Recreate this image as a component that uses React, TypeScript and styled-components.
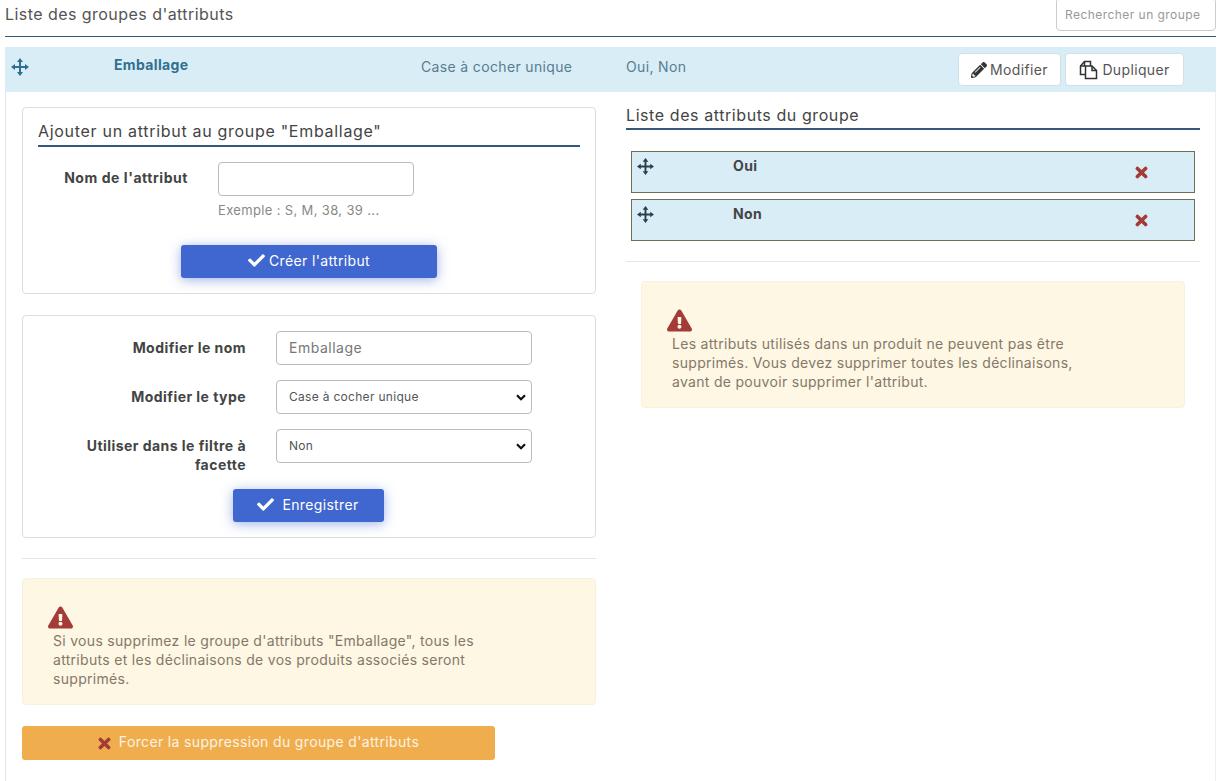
import React from "react";
import styled, { createGlobalStyle } from "styled-components";
import { FaCheck, FaExclamationTriangle, FaPencilAlt } from "react-icons/fa";

const GlobalStyle = createGlobalStyle`
  html, body {
    margin: 0;
    padding: 0;
    background: #fff;
    font-family: "Inter", "Open Sans", sans-serif;
    color: #444;
  }
  * { box-sizing: border-box; }
`;

const chevron =
  "data:image/svg+xml;utf8,<svg xmlns='http://www.w3.org/2000/svg' width='10' height='7' viewBox='0 0 10 7'><path d='M1 1.2l4 4 4-4' fill='none' stroke='%23111' stroke-width='2.2'/></svg>";

const Page = styled.div`
  width: 1220px;
  height: 781px;
  padding: 0 4px 0 5px;
  overflow: hidden;
`;

const TopBar = styled.div`
  display: flex;
  justify-content: space-between;
  align-items: flex-start;
  height: 37px;
  border-bottom: 1px solid #34587c;
`;

const PageTitle = styled.div`
  padding-top: 5px;
  font-size: 16px;
  letter-spacing: 0.45px;
  line-height: 18px;
  color: #555;
`;

const SearchInput = styled.input`
  width: 160px;
  height: 33px;
  margin-top: -2px;
  padding: 0 8px;
  border: 1px solid #ccc;
  border-radius: 4px;
  font: inherit;
  font-size: 12px;
  letter-spacing: 0.45px;
  &::placeholder { color: #999; opacity: 1; }
`;

const Panel = styled.section`
  margin-top: 10px;
  height: 734px;
  border-left: 1px solid #d9e6f2;
  border-right: 1px solid #e6f0f6;
`;

const PanelHeader = styled.header`
  display: grid;
  grid-template-columns: 109px 307px 205px 1fr auto;
  height: 45px;
  margin-left: -1px;
  margin-right: -1px;
  background: #d9edf7;
  color: #5a7c90;
  font-size: 14px;
  letter-spacing: 0.35px;
`;

const Cell = styled.div`
  padding-top: 11px;
  line-height: 18px;
`;

const GripCell = styled(Cell)`
  padding: 11px 0 0 6px;
  color: #2f6f8f;
`;

const GroupName = styled(Cell)`
  padding-top: 9px;
  font-weight: 700;
  color: #31708f;
`;

const HeaderActions = styled.div`
  display: flex;
  align-items: flex-start;
  gap: 4px;
  padding: 6px 32px 0 0;
`;

const GhostButton = styled.button<{ $w: number }>`
  display: flex;
  align-items: center;
  justify-content: center;
  gap: 3px;
  height: 33px;
  width: ${(p) => p.$w}px;
  padding: 0;
  background: #fff;
  border: 1px solid #d3dfe6;
  border-radius: 4px;
  font: inherit;
  font-size: 14px;
  letter-spacing: 0.35px;
  color: #555;
`;

const Columns = styled.div`
  display: grid;
  grid-template-columns: 574px 574px;
  column-gap: 30px;
  padding: 15px 16px 0;
`;

const Column = styled.div`
  display: flex;
  flex-direction: column;
`;

const Card = styled.div`
  border: 1px solid #ddd;
  border-radius: 4px;
  background: #fff;
`;

const AddCard = styled(Card)`
  height: 187px;
  padding: 15px 15px 0;
`;

const EditCard = styled(Card)`
  height: 223px;
  margin-top: 21px;
  padding: 15px 0 0;
`;

const SectionTitle = styled.h3`
  margin: 0;
  height: 24px;
  font-size: 16px;
  font-weight: 400;
  letter-spacing: 0.7px;
  line-height: 16px;
  color: #444;
  border-bottom: 2px solid #34587c;
`;

const RightTitle = styled(SectionTitle)`
  height: 23px;
  letter-spacing: 0.58px;
`;

const FieldRow = styled.div`
  display: grid;
  grid-template-columns: 150px 196px;
  column-gap: 30px;
  margin-top: 15px;
`;

const AddLabel = styled.label`
  padding-top: 7px;
  font-size: 14px;
  font-weight: 700;
  letter-spacing: 0.55px;
  line-height: 18px;
  white-space: nowrap;
  color: #444;
  text-align: right;
`;

const TextField = styled.input`
  width: 100%;
  height: 34px;
  padding: 0 12px 2px;
  border: 1px solid #bbb;
  border-radius: 4px;
  background: #fff;
  font: inherit;
  font-size: 14px;
  letter-spacing: 0.5px;
  color: #777;
`;

const Hint = styled.div`
  grid-column: 2;
  margin-top: 5px;
  font-size: 13px;
  letter-spacing: 0.35px;
  line-height: 18px;
  white-space: nowrap;
  color: #888;
`;

const ButtonRow = styled.div`
  display: flex;
  justify-content: center;
  padding-right: 2px;
`;

const AddButtonRow = styled(ButtonRow)`
  margin-top: 26px;
  padding-right: 0;
`;

const PrimaryButton = styled.button<{ $w: number; $gap: number }>`
  display: flex;
  align-items: center;
  justify-content: center;
  gap: ${(p) => p.$gap}px;
  height: 33px;
  width: ${(p) => p.$w}px;
  padding: 0 0 2px;
  border: none;
  border-radius: 3px;
  background: #3f67cf;
  color: #fff;
  font: inherit;
  font-size: 14px;
  letter-spacing: 0.35px;
  box-shadow: 0 2px 12px rgba(63, 103, 207, 0.5);
`;

const EditRow = styled.div`
  display: grid;
  grid-template-columns: 223px 256px;
  column-gap: 30px;
  margin-bottom: 15px;
`;

const EditLabel = styled.label`
  padding: 7px 0 0 50px;
  font-size: 14px;
  font-weight: 700;
  letter-spacing: 0.45px;
  line-height: 19px;
  color: #444;
  text-align: right;
`;

const SelectField = styled.select`
  width: 100%;
  height: 34px;
  padding: 0 12px 2px;
  appearance: none;
  border: 1px solid #bbb;
  border-radius: 4px;
  background: #fff url("${chevron}") no-repeat right 5px center;
  font: inherit;
  font-size: 12px;
  letter-spacing: 0.3px;
  color: #555;
`;

const Divider = styled.hr`
  width: 100%;
  margin: 20px 0 0;
  border: none;
  border-top: 1px solid #e5e5e5;
`;

const Alert = styled.div`
  height: 127px;
  padding: 27px 25px 0;
  background: #fdf7e3;
  border: 1px solid #faf1dc;
  border-radius: 4px;
`;

const LeftAlert = styled(Alert)`
  margin-top: 19px;
`;

const RightAlert = styled(Alert)`
  margin: 19px 15px 0;
`;

const AlertIcon = styled(FaExclamationTriangle)`
  display: block;
  width: 25px;
  height: 23px;
  color: #a33b38;
`;

const AlertText = styled.p`
  width: 440px;
  margin: 2px 0 0 5px;
  font-size: 14px;
  letter-spacing: 0.3px;
  line-height: 19px;
  color: #85786a;
`;

const DangerButton = styled.button`
  display: flex;
  align-items: center;
  justify-content: center;
  gap: 8px;
  width: 473px;
  height: 34px;
  margin-top: 21px;
  padding: 0 0 3px;
  border: none;
  border-radius: 3px;
  background: #f0ad4e;
  color: #fdf3e2;
  font: inherit;
  font-size: 14px;
  letter-spacing: 0.35px;
`;

const DangerIcon = styled.span`
  display: flex;
  padding-top: 3px;
  color: #a33b38;
`;

const AttributeList = styled.div`
  display: flex;
  flex-direction: column;
  gap: 6px;
  margin: 21px 5px 0;
`;

const AttributeRow = styled.div`
  display: grid;
  grid-template-columns: 101px 1fr 59px;
  height: 42px;
  background: #d9edf7;
  border: 1px solid #6e6e55;
  font-size: 14px;
  font-weight: 700;
  letter-spacing: 0.4px;
  color: #444;
`;

const AttrGrip = styled.div`
  padding: 6px 0 0 5px;
  color: #2c3e50;
`;

const AttrName = styled.div`
  padding-top: 5px;
  line-height: 18px;
`;

const DeleteCell = styled.div`
  padding-top: 13px;
  color: #a33b38;
`;

const MoveIcon = ({ size }: { size: number }) => (
  <svg width={size} height={size} viewBox="0 0 18 18" fill="currentColor">
    <path d="M9 0l3 4h-2v4h4V6l4 3-4 3v-2h-4v4h2l-3 4-3-4h2v-4H4v2L0 9l4-3v2h4V4H6z" />
  </svg>
);

const CrossIcon = ({ size }: { size: number }) => (
  <svg width={size} height={size} viewBox="0 0 13 13" fill="none" stroke="currentColor" strokeWidth="3.6" strokeLinecap="round">
    <path d="M2.4 2.4l8.2 8.2M10.6 2.4l-8.2 8.2" />
  </svg>
);

const DuplicateIcon = () => (
  <svg width="20" height="20" viewBox="0 0 20 20" fill="none" stroke="#333" strokeWidth="1.5">
    <path d="M6.5 14.5H1.5V6L5.5 1.5h6V6" />
    <path d="M5.5 1.5V6H1.5" />
    <path d="M6.5 6h6.5L17.5 10.5v8H6.5z" />
    <path d="M13 6v4.5h4.5" />
  </svg>
);

const AttributeItem = ({ name }: { name: string }) => (
  <AttributeRow>
    <AttrGrip>
      <MoveIcon size={17} />
    </AttrGrip>
    <AttrName>{name}</AttrName>
    <DeleteCell>
      <CrossIcon size={13} />
    </DeleteCell>
  </AttributeRow>
);

export default function App() {
  return (
    <Page>
      <GlobalStyle />
      <TopBar>
        <PageTitle>Liste des groupes d'attributs</PageTitle>
        <SearchInput placeholder="Rechercher un groupe" />
      </TopBar>
      <Panel>
        <PanelHeader>
          <GripCell>
            <MoveIcon size={18} />
          </GripCell>
          <GroupName>Emballage</GroupName>
          <Cell>Case à cocher unique</Cell>
          <Cell>Oui, Non</Cell>
          <HeaderActions>
            <GhostButton $w={103}>
              <FaPencilAlt size={16} color="#333" />
              Modifier
            </GhostButton>
            <GhostButton $w={119}>
              <DuplicateIcon />
              Dupliquer
            </GhostButton>
          </HeaderActions>
        </PanelHeader>
        <Columns>
          <Column>
            <AddCard>
              <SectionTitle>Ajouter un attribut au groupe "Emballage"</SectionTitle>
              <FieldRow>
                <AddLabel>Nom de l'attribut</AddLabel>
                <TextField />
                <Hint>Exemple : S, M, 38, 39 ...</Hint>
              </FieldRow>
              <AddButtonRow>
                <PrimaryButton $w={256} $gap={4}>
                  <FaCheck size={17} />
                  Créer l'attribut
                </PrimaryButton>
              </AddButtonRow>
            </AddCard>
            <EditCard>
              <EditRow>
                <EditLabel>Modifier le nom</EditLabel>
                <TextField defaultValue="Emballage" />
              </EditRow>
              <EditRow>
                <EditLabel>Modifier le type</EditLabel>
                <SelectField defaultValue="unique">
                  <option value="unique">Case à cocher unique</option>
                </SelectField>
              </EditRow>
              <EditRow>
                <EditLabel>Utiliser dans le filtre à facette</EditLabel>
                <SelectField defaultValue="non">
                  <option value="non">Non</option>
                </SelectField>
              </EditRow>
              <ButtonRow>
                <PrimaryButton $w={151} $gap={8}>
                  <FaCheck size={17} />
                  Enregistrer
                </PrimaryButton>
              </ButtonRow>
            </EditCard>
            <Divider />
            <LeftAlert>
              <AlertIcon />
              <AlertText>
                Si vous supprimez le groupe d'attributs "Emballage", tous les attributs et les
                déclinaisons de vos produits associés seront supprimés.
              </AlertText>
            </LeftAlert>
            <DangerButton>
              <DangerIcon>
                <CrossIcon size={13} />
              </DangerIcon>
              Forcer la suppression du groupe d'attributs
            </DangerButton>
          </Column>
          <Column>
            <RightTitle>Liste des attributs du groupe</RightTitle>
            <AttributeList>
              <AttributeItem name="Oui" />
              <AttributeItem name="Non" />
            </AttributeList>
            <Divider />
            <RightAlert>
              <AlertIcon />
              <AlertText>
                Les attributs utilisés dans un produit ne peuvent pas être supprimés. Vous devez
                supprimer toutes les déclinaisons, avant de pouvoir supprimer l'attribut.
              </AlertText>
            </RightAlert>
          </Column>
        </Columns>
      </Panel>
    </Page>
  );
}
